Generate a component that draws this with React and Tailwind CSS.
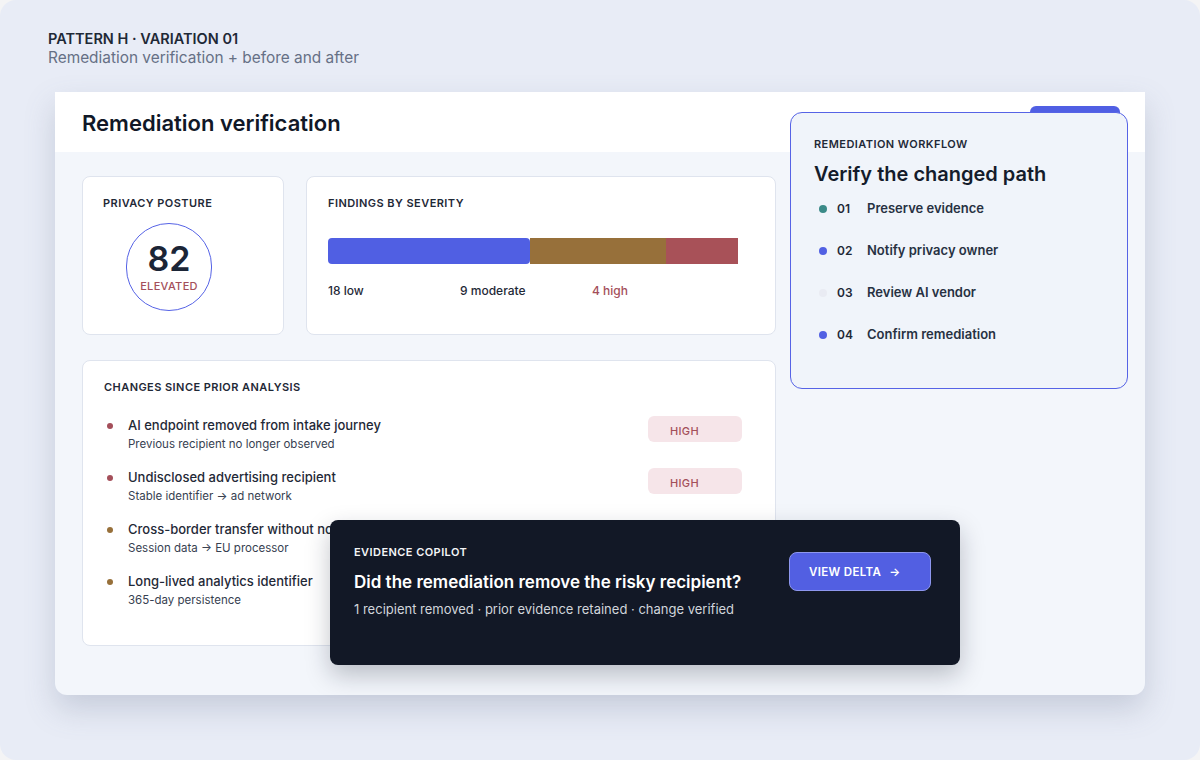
import React from "react";

const changes = [
  { title: "AI endpoint removed from intake journey", sub: "Previous recipient no longer observed", tone: "high" },
  { title: "Undisclosed advertising recipient", sub: "Stable identifier → ad network", tone: "high" },
  { title: "Cross-border transfer without notice", sub: "Session data → EU processor", tone: "moderate" },
  { title: "Long-lived analytics identifier", sub: "365-day persistence", tone: "moderate" },
];

const steps = [
  { n: "01", label: "Preserve evidence", dot: "bg-[#3b8a88]" },
  { n: "02", label: "Notify privacy owner", dot: "bg-[#5160e3]" },
  { n: "03", label: "Review AI vendor", dot: "bg-[#e9ebf3]" },
  { n: "04", label: "Confirm remediation", dot: "bg-[#5160e3]" },
];

function PostureCard() {
  return (
    <div className="w-[202px] h-[159px] bg-white rounded-lg border border-[#dfe4ee] pt-[18px] px-5">
      <div className="text-[11px] font-semibold tracking-[0.04em] text-[#1f2937]">PRIVACY POSTURE</div>
      <div className="mt-[11px] ml-[23px] w-[86px] h-[88px] rounded-full border border-[#5663e6] flex flex-col items-center justify-center">
        <div className="text-[34px] leading-[36px] font-semibold text-[#1b2536] mt-[1px]">82</div>
        <div className="text-[11px] leading-[14px] font-medium tracking-[0.03em] text-[#a44f5a] mt-[2px]">ELEVATED</div>
      </div>
    </div>
  );
}

function FindingsCard() {
  return (
    <div className="w-[470px] h-[159px] bg-white rounded-lg border border-[#dfe4ee] pt-[18px] px-[21px]">
      <div className="text-[11px] font-semibold tracking-[0.04em] text-[#1f2937]">FINDINGS BY SEVERITY</div>
      <div className="mt-[26px] flex h-[26px] w-[410px]">
        <div className="w-[202px] bg-[#505fe3] rounded-[4px]" />
        <div className="w-[136px] bg-[#97703a]" />
        <div className="w-[72px] bg-[#a85158]" />
      </div>
      <div className="mt-[18px] flex text-[12px] font-medium">
        <span className="w-[132px] text-[#1f2937]">18 low</span>
        <span className="w-[132px] text-[#1f2937]">9 moderate</span>
        <span className="text-[#a44f5a]">4 high</span>
      </div>
    </div>
  );
}

function ChangesCard() {
  return (
    <div className="w-[694px] h-[286px] bg-white rounded-lg border border-[#dfe4ee] pt-[18px] pl-[21px] pr-[33px]">
      <div className="text-[11px] font-semibold tracking-[0.04em] text-[#1f2937]">CHANGES SINCE PRIOR ANALYSIS</div>
      <div className="mt-[20px] flex flex-col gap-[14px]">
        {changes.map((c) => (
          <div key={c.title} className="flex items-start h-[38px]">
            <span
              className={`mt-[7px] ml-[3px] w-[6px] h-[6px] rounded-full ${c.tone === "high" ? "bg-[#a44f5a]" : "bg-[#97703a]"}`}
            />
            <div className="ml-[15px] flex-1">
              <div className="text-[13px] leading-[18px] font-medium text-[#1f2937]">{c.title}</div>
              <div className="text-[11.5px] leading-[16px] mt-[2px] text-[#374151]">{c.sub}</div>
            </div>
            {c.tone === "high" && (
              <div className="w-[94px] h-[26px] rounded-md bg-[#f6e5e9] pl-[22px] pt-[9px] text-[11px] leading-[13px] font-medium tracking-[0.03em] text-[#a44f5a]">
                HIGH
              </div>
            )}
          </div>
        ))}
      </div>
    </div>
  );
}

function WorkflowPanel() {
  return (
    <div className="absolute left-[735px] top-[20px] w-[338px] h-[277px] rounded-xl border border-[#5663e6] bg-[#f0f4fa] pt-[23px] px-[23px]">
      <div className="text-[11px] font-semibold tracking-[0.04em] text-[#1f2937]">REMEDIATION WORKFLOW</div>
      <div className="mt-[8px] text-[20px] leading-[26px] font-semibold text-[#141c2b]">Verify the changed path</div>
      <div className="mt-[13px] flex flex-col gap-[24px]">
        {steps.map((s) => (
          <div key={s.n} className="flex items-center h-[18px]">
            <span className={`ml-[5px] w-[8px] h-[8px] rounded-full ${s.dot}`} />
            <span className="ml-[10px] w-[30px] text-[12px] font-semibold text-[#1f2937]">{s.n}</span>
            <span className="text-[13px] font-semibold text-[#273142]">{s.label}</span>
          </div>
        ))}
      </div>
    </div>
  );
}

function CopilotPanel() {
  return (
    <div className="absolute left-[275px] top-[428px] w-[630px] h-[145px] rounded-lg bg-[#121826] shadow-[0_10px_24px_rgba(15,23,42,0.25)] flex pt-[24px] pl-[24px] pr-[29px]">
      <div className="flex-1">
        <div className="text-[11px] font-semibold tracking-[0.04em] text-[#f3f4f6]">EVIDENCE COPILOT</div>
        <div className="mt-[10px] text-[17px] leading-[22px] font-semibold text-white">Did the remediation remove the risky recipient?</div>
        <div className="mt-[7px] text-[13px] leading-[18px] text-[#d1d5db]">1 recipient removed · prior evidence retained · change verified</div>
      </div>
      <div className="mt-[8px] w-[142px] h-[39px] rounded-lg bg-[#525fe2] border border-[#8e97ee] pl-[19px] pt-[2px] flex items-center text-[11.5px] font-semibold tracking-[0.03em] text-white">
        VIEW DELTA <span className="ml-[8px]">→</span>
      </div>
    </div>
  );
}

export default function App() {
  return (
    <div className="w-[1200px] h-[760px] bg-[#f4f4f5]" style={{ fontFamily: "Inter, 'Noto Sans', sans-serif" }}>
      <div className="w-full h-full rounded-2xl bg-[#e8ecf6] pt-[29px] px-12">
        <div className="text-[14.5px] leading-[19px] font-semibold text-[#1f2937]">PATTERN H · VARIATION 01</div>
        <div className="text-[15.4px] leading-[20px] text-[#667085]">Remediation verification + before and after</div>

        <div className="relative mt-[24px] ml-[7px] w-[1090px] h-[603px] bg-[#f3f6fb] rounded-b-xl shadow-[0_14px_30px_rgba(100,110,140,0.25)]">
          <div className="h-[60px] bg-white px-[27px] pt-[2px] flex items-center">
            <div className="text-[22px] font-semibold text-[#111827]">Remediation verification</div>
          </div>
          <div className="absolute left-[975px] top-[14px] w-[90px] h-[30px] rounded-md bg-[#505fe3]" />

          <div className="pt-[24px] pl-[27px]">
            <div className="flex gap-[22px]">
              <PostureCard />
              <FindingsCard />
            </div>
            <div className="mt-[25px]">
              <ChangesCard />
            </div>
          </div>

          <WorkflowPanel />
          <CopilotPanel />
        </div>
      </div>
    </div>
  );
}
